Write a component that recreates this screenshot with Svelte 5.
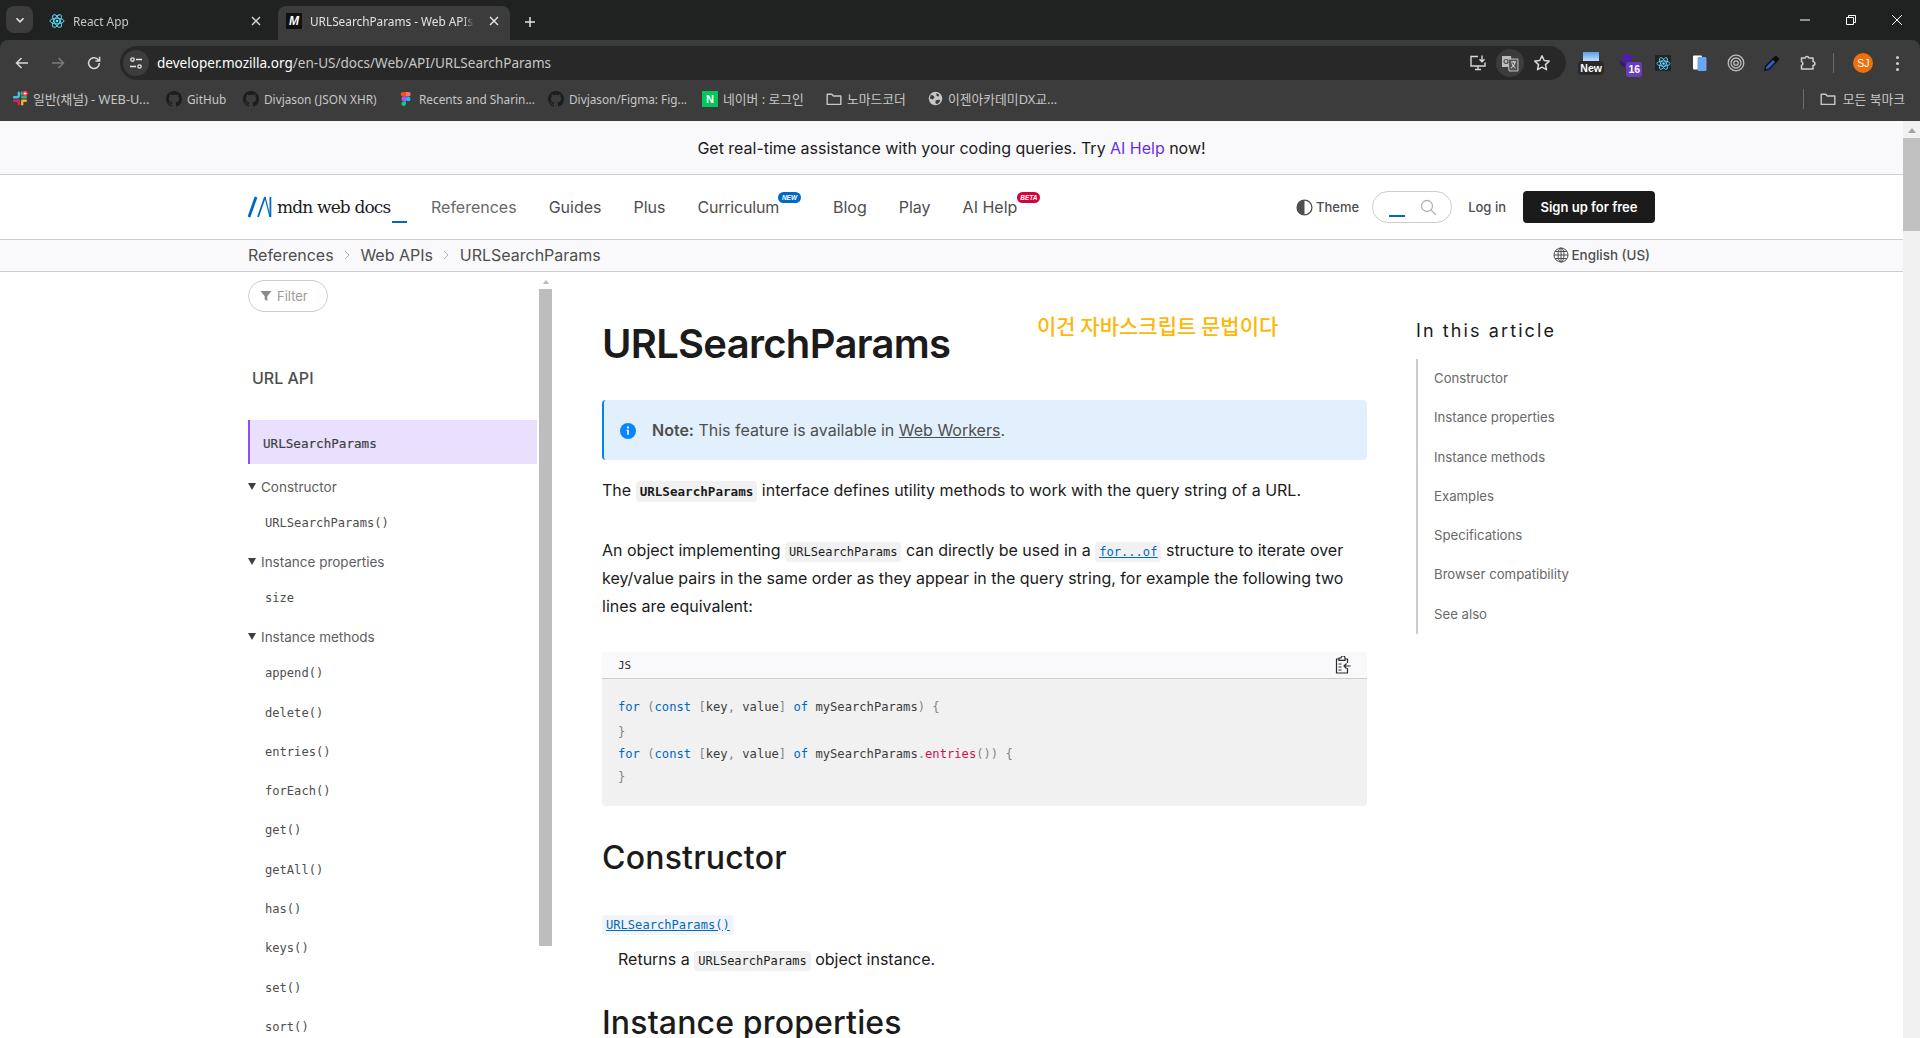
<script>
  const GH =
    'M8 0C3.58 0 0 3.58 0 8c0 3.54 2.29 6.53 5.47 7.59.4.07.55-.17.55-.38 0-.19-.01-.82-.01-1.49-2.01.37-2.53-.49-2.69-.94-.09-.23-.48-.94-.82-1.13-.28-.15-.68-.52-.01-.53.63-.01 1.08.58 1.23.82.72 1.21 1.87.87 2.33.66.07-.52.28-.87.51-1.07-1.78-.2-3.64-.89-3.64-3.95 0-.87.31-1.59.82-2.15-.08-.2-.36-1.02.08-2.12 0 0 .67-.21 2.2.82.64-.18 1.32-.27 2-.27.68 0 1.36.09 2 .27 1.53-1.04 2.2-.82 2.2-.82.44 1.1.16 1.92.08 2.12.51.56.82 1.27.82 2.15 0 3.07-1.87 3.75-3.65 3.95.29.25.54.73.54 1.48 0 1.07-.01 1.93-.01 2.2 0 .21.15.46.55.38A8.013 8.013 0 0016 8c0-4.42-3.58-8-8-8z';

  const bookmarks = [
    { icon: 'slack', text: '일반(채널) - WEB-U...', width: 154, ko: true },
    { icon: 'github', text: 'GitHub', width: 77 },
    { icon: 'github', text: 'Divjason (JSON XHR)', width: 155 },
    { icon: 'figma', text: 'Recents and Sharin...', width: 150 },
    { icon: 'github', text: 'Divjason/Figma: Fig...', width: 154 },
    { icon: 'naver', text: '네이버 : 로그인', width: 124, ko: true },
    { icon: 'folder', text: '노마드코더', width: 101, ko: true },
    { icon: 'globe', text: '이젠아카데미DX교...', width: 140, ko: true }
  ];

  const menu = ['Guides', 'Plus'];
  const toc = ['Constructor', 'Instance properties', 'Instance methods', 'Examples', 'Specifications', 'Browser compatibility', 'See also'];
  const methods = ['append()', 'delete()', 'entries()', 'forEach()', 'get()', 'getAll()', 'has()', 'keys()', 'set()', 'sort()'];
</script>

{#snippet atom(size)}
  <svg width={size} height={size} viewBox="0 0 24 24" fill="none" stroke="#61dafb" stroke-width="1.4">
    <ellipse cx="12" cy="12" rx="10.5" ry="4.2" />
    <ellipse cx="12" cy="12" rx="10.5" ry="4.2" transform="rotate(60 12 12)" />
    <ellipse cx="12" cy="12" rx="10.5" ry="4.2" transform="rotate(120 12 12)" />
    <circle cx="12" cy="12" r="2" fill="#61dafb" stroke="none" />
  </svg>
{/snippet}

{#snippet folder(size)}
  <svg width={size} height={size} viewBox="0 0 16 16" fill="none" stroke="#c7c7c7" stroke-width="1.4">
    <path d="M1.2 3.2h4.6l1.6 1.8h7.4v8.4H1.2z" stroke-linejoin="round" />
  </svg>
{/snippet}

{#snippet bookmarkIcon(kind)}
  {#if kind === 'slack'}
    <svg width="17" height="17" viewBox="0 0 16 16">
      <rect x="5.6" y="1" width="2.4" height="6" rx="1.2" fill="#36c5f0" />
      <rect x="1" y="5.6" width="6" height="2.4" rx="1.2" fill="#36c5f0" />
      <rect x="9" y="5.6" width="6" height="2.4" rx="1.2" fill="#2eb67d" />
      <rect x="8.6" y="1" width="2.4" height="4" rx="1.2" fill="#2eb67d" />
      <rect x="9" y="9" width="6" height="2.4" rx="1.2" fill="#ecb22e" />
      <rect x="9" y="10" width="2.4" height="5" rx="1.2" fill="#ecb22e" />
      <rect x="5.6" y="9" width="2.4" height="6" rx="1.2" fill="#e01e5a" />
      <rect x="1" y="9" width="6" height="2.4" rx="1.2" fill="#e01e5a" />
      <circle cx="13" cy="3" r="2.8" fill="#e8384f" />
      <path d="M13 1.6v2.8M11.6 3h2.8" stroke="#fff" stroke-width="1" />
    </svg>
  {:else if kind === 'github'}
    <svg width="16" height="16" viewBox="0 0 16 16"><path d={GH} fill="#1b1d1f" /></svg>
  {:else if kind === 'figma'}
    <svg width="16" height="16" viewBox="0 0 16 16">
      <path d="M4.5 1h3.5v4.6H5.8A2.3 2.3 0 0 1 4.5 1z" fill="#f24e1e" />
      <path d="M8 1h2.4a2.3 2.3 0 0 1 0 4.6H8z" fill="#ff7262" />
      <path d="M8 5.6h-2.2a2.3 2.3 0 0 0 0 4.8H8z" fill="#a259ff" />
      <circle cx="10.2" cy="8" r="2.3" fill="#1abcfe" />
      <path d="M5.8 10.4H8v2.4a2.3 2.3 0 1 1-2.2-2.4z" fill="#0acf83" />
    </svg>
  {:else if kind === 'naver'}
    <span class="naver">N</span>
  {:else if kind === 'folder'}
    {@render folder(16)}
  {:else}
    <svg width="15" height="15" viewBox="0 0 16 16">
      <circle cx="8" cy="8" r="7.2" fill="#c7c7c7" />
      <path d="M3 4l3 1 1 2-2 2-3-1zM9 2l3 2-1 2-2-1zM8 10l4-1 1 2-3 3-2-1z" fill="#3c3c3c" />
    </svg>
  {/if}
{/snippet}

{#snippet scrollArrow()}
  <span class="arrow"></span>
{/snippet}

<div class="chrome">
  <div class="tabstrip">
    <div class="tab-search">
      <svg width="10" height="10" viewBox="0 0 10 10" fill="none" stroke="#e3e3e3" stroke-width="1.6"><path d="M1.5 3.2L5 6.8l3.5-3.6" /></svg>
    </div>
    <div class="tab">
      <span class="favicon">{@render atom(16)}</span>
      <span class="tab-title">React App</span>
      <svg class="tab-x" width="10" height="10" viewBox="0 0 10 10" stroke="#d8d8d8" stroke-width="1.4"><path d="M1 1l8 8M9 1l-8 8" /></svg>
    </div>
    <div class="tab active">
      <span class="mdn-fav">M</span>
      <span class="tab-title">URLSearchParams - Web APIs</span>
      <svg class="tab-x" width="10" height="10" viewBox="0 0 10 10" stroke="#e8e8e8" stroke-width="1.4"><path d="M1 1l8 8M9 1l-8 8" /></svg>
    </div>
    <svg class="plus" width="12" height="12" viewBox="0 0 12 12" stroke="#e3e3e3" stroke-width="1.5"><path d="M6 1v10M1 6h10" /></svg>
    <div class="win">
      <svg width="12" height="12" viewBox="0 0 12 12" stroke="#fff"><path d="M1 6h10" /></svg>
      <svg width="12" height="12" viewBox="0 0 12 12" fill="none" stroke="#fff"><path d="M1.5 3.5h7v7h-7zM3.5 3.5v-2h7v7h-2" /></svg>
      <svg width="12" height="12" viewBox="0 0 12 12" stroke="#fff"><path d="M1 1l10 10M11 1L1 11" /></svg>
    </div>
  </div>

  <div class="toolbar">
    <div class="navbtns">
      <svg width="16" height="16" viewBox="0 0 16 16" fill="none" stroke="#d8d8d8" stroke-width="1.5"><path d="M14 8H2.5M7.5 3L2.5 8l5 5" /></svg>
      <svg width="16" height="16" viewBox="0 0 16 16" fill="none" stroke="#7c7c7c" stroke-width="1.5"><path d="M2 8h11.5M8.5 3l5 5-5 5" /></svg>
      <svg width="16" height="16" viewBox="0 0 16 16" fill="none" stroke="#d8d8d8" stroke-width="1.5"><path d="M13.4 8a5.4 5.4 0 1 1-1.6-3.8L13.6 6M13.6 1.8V6H9.4" /></svg>
    </div>
    <div class="omnibox">
      <div class="site-info">
        <svg width="14" height="14" viewBox="0 0 14 14" fill="none" stroke="#e3e3e3" stroke-width="1.3">
          <circle cx="3.5" cy="3.5" r="1.7" /><path d="M7 3.5h6M1 10.5h6" /><circle cx="10.5" cy="10.5" r="1.7" />
        </svg>
      </div>
      <div class="url"><span class="host">developer.mozilla.org</span>/en-US/docs/Web/API/URLSearchParams</div>
      <div class="omni-actions">
        <svg width="18" height="18" viewBox="0 0 18 18" fill="none" stroke="#d8d8d8" stroke-width="1.4"><path d="M9 2.5H2v9.5h14V8.5M6 15.5h6M9 12v3.5M13 1.5v6M10.5 5.2L13 7.7l2.5-2.5" /></svg>
        <span class="translate">
          <svg width="18" height="18" viewBox="0 0 18 18">
            <path d="M1 2h9l1 11H1z" fill="#bdbdbd" /><path d="M7 5h10v12H8z" fill="#545454" stroke="#bdbdbd" />
            <path d="M10 8h5M12.5 7v1M14 8c-.6 3-2 5-4 6M11 9.5c.6 2 2 3.5 3.5 4.5" stroke="#e3e3e3" fill="none" />
            <circle cx="5" cy="7.5" r="2" fill="none" stroke="#4a4a4a" stroke-width="1.2" />
          </svg>
        </span>
        <svg width="18" height="18" viewBox="0 0 18 18" fill="none" stroke="#d8d8d8" stroke-width="1.5" stroke-linejoin="round"><path d="M9 1.8l2.2 4.7 5 .6-3.7 3.5 1 5.1L9 13.2l-4.5 2.5 1-5.1L1.8 7.1l5-.6z" /></svg>
      </div>
    </div>
    <div class="extensions">
      <span class="ext new-ext">
        <span class="ext-s"></span>
        <span class="ext-new">New</span>
      </span>
      <span class="ext stack">
        <svg width="18" height="18" viewBox="0 0 18 18"><path d="M9 1l7 5-7 5-7-5z" fill="#4d1dab" /><path d="M2 8l7 5-3 2-4-3z" fill="#3a1489" /></svg>
        <span class="ext-count">16</span>
      </span>
      <span class="ext react-ext">{@render atom(15)}</span>
      <span class="ext">
        <svg width="18" height="18" viewBox="0 0 18 18"><rect x="2" y="1.5" width="9" height="14" rx="1" fill="#fff" /><rect x="6.5" y="3" width="9" height="14" rx="1.5" fill="#6ba6f4" /></svg>
      </span>
      <span class="ext">
        <svg width="18" height="18" viewBox="0 0 18 18" fill="none" stroke="#bdbdbd"><circle cx="9" cy="9" r="7.8" stroke-width="1.3" /><circle cx="9" cy="9" r="5" stroke-width="1.3" /><circle cx="9" cy="9" r="2.2" stroke-width="1.3" /></svg>
      </span>
      <span class="ext">
        <svg width="18" height="18" viewBox="0 0 18 18"><path d="M1.8 16.2l1-4L10 5l3 3-7.2 7.2z" fill="#2f5fd0" stroke="#0d0d0d" stroke-width="1.3" /><path d="M9.5 4.5L13 1.5l3.5 3.5-3 3.5z" fill="#0d0d0d" /></svg>
      </span>
      <span class="ext">
        <svg width="18" height="18" viewBox="0 0 18 18" fill="none" stroke="#d0d0d0" stroke-width="1.5" stroke-linejoin="round"><path d="M2.5 4h3.6a2 2 0 0 1 3.8 0h4.1v3.6a1.9 1.9 0 0 1 0 3.8V15H2.5v-3.6a2 2 0 0 0 0-3.8z" /></svg>
      </span>
    </div>
    <span class="tool-divider"></span>
    <span class="avatar">SJ</span>
    <span class="dots"><i></i><i></i><i></i></span>
  </div>

  <div class="bookmarks">
    {#each bookmarks as b}
      <div class="bm" class:ko={b.ko} style="width: {b.width}px">
        <span class="bm-icon">{@render bookmarkIcon(b.icon)}</span>
        <span>{b.text}</span>
      </div>
    {/each}
    <div class="bm-right">
      <span class="tool-divider"></span>
      {@render folder(16)}
      <span>모든 북마크</span>
    </div>
  </div>
</div>

<div class="viewport">
  <div class="site">
    <div class="banner">Get real-time assistance with your coding queries. Try <a href="#ai">AI Help</a> now!</div>

    <header class="topbar">
      <div class="wrap nav">
        <div class="logo">
          <svg width="24" height="22" viewBox="0 0 24 22" fill="none">
            <path d="M1 21L8 1" stroke="#0069c2" stroke-width="2.8" />
            <path d="M10 21L17 1" stroke="#0069c2" stroke-width="1.8" />
            <path d="M17 1l5 20" stroke="#0069c2" stroke-width="1.2" />
            <path d="M22.4 1v20" stroke="#0069c2" stroke-width="1.8" />
          </svg>
          <span class="wordmark">mdn web docs</span>
          <span class="caret"></span>
        </div>
        <nav class="menu">
          <span class="first">References</span>
          {#each menu as m}<span>{m}</span>{/each}
          <span class="badged curr">Curriculum<em class="badge new">NEW</em></span>
          <span>Blog</span>
          <span>Play</span>
          <span class="badged">AI Help<em class="badge beta">BETA</em></span>
        </nav>
        <div class="actions">
          <span class="theme">
            <svg width="17" height="17" viewBox="0 0 16 16"><circle cx="8" cy="8" r="7" fill="#fff" stroke="#4e4e4e" stroke-width="1.2" /><path d="M8 1a7 7 0 0 0 0 14z" fill="#4e4e4e" /></svg>
            Theme
          </span>
          <div class="search">
            <span class="search-caret"></span>
            <svg width="17" height="17" viewBox="0 0 17 17" fill="none" stroke="#b3b3b3" stroke-width="1.3"><circle cx="7" cy="7" r="5.5" /><path d="M11 11l5 5" /></svg>
          </div>
          <span class="login">Log in</span>
          <span class="signup">Sign up for free</span>
        </div>
      </div>
    </header>

    <div class="crumbs">
      <div class="wrap crumb-row">
        <span>References</span>
        <svg width="8" height="10" viewBox="0 0 8 10" fill="none" stroke="#b3b3b3"><path d="M2 1l4 4-4 4" /></svg>
        <span>Web APIs</span>
        <svg width="8" height="10" viewBox="0 0 8 10" fill="none" stroke="#b3b3b3"><path d="M2 1l4 4-4 4" /></svg>
        <span>URLSearchParams</span>
        <span class="lang">
          <svg width="16" height="16" viewBox="0 0 16 16" fill="none" stroke="#4e4e4e"><circle cx="8" cy="8" r="7" /><ellipse cx="8" cy="8" rx="3" ry="7" /><path d="M1 8h14M2 4.5h12M2 11.5h12M8 1v14" /></svg>
          English (US)
        </span>
      </div>
    </div>

    <main class="wrap main">
      <aside class="sidebar">
        <div class="side-inner">
          <div class="filter">
            <svg width="12" height="12" viewBox="0 0 12 12"><path d="M.5 1h11L7.3 6.2V11L4.7 9.6V6.2z" fill="#8a8a8a" /></svg>
            Filter
          </div>
          <div class="side-title">URL API</div>
          <div class="side-active">URLSearchParams</div>
          <div class="summary first-summary"><i></i>Constructor</div>
          <div class="side-code">URLSearchParams()</div>
          <div class="summary"><i></i>Instance properties</div>
          <div class="side-code">size</div>
          <div class="summary"><i></i>Instance methods</div>
          {#each methods as m}
            <div class="side-code">{m}</div>
          {/each}
        </div>
        <div class="side-scroll">
          {@render scrollArrow()}
          <div class="side-thumb"></div>
        </div>
      </aside>

      <article class="article">
        <h1>URLSearchParams</h1>
        <div class="note">
          <svg width="16" height="16" viewBox="0 0 16 16"><circle cx="8" cy="8" r="8" fill="#0a84ff" /><circle cx="8" cy="4.4" r="1.1" fill="#fff" /><path d="M6.6 6.8h2.2v5h-1.6v-3.8h-.6z" fill="#fff" /></svg>
          <p><strong>Note:</strong> This feature is available in <a href="#w">Web Workers</a>.</p>
        </div>
        <p class="p1">The <code class="strong">URLSearchParams</code> interface defines utility methods to work with the query string of a URL.</p>
        <p class="p2">An object implementing <code>URLSearchParams</code> can directly be used in a <a class="code-link" href="#f"><code>for...of</code></a> structure to iterate over key/value pairs in the same order as they appear in the query string, for example the following two lines are equivalent:</p>

        <div class="codeblock">
          <div class="code-head">
            <span>JS</span>
            <svg width="16" height="18" viewBox="0 0 16 18" fill="none" stroke="#2b2b2b" stroke-width="1.2"><path d="M4 3H1.5v14h11v-5M10 3h2.5v4M4 2h2a2 2 0 0 1 4 0v2.4H4zM3.5 8h3M3.5 11h3M3.5 14h3M15.5 10H9M11.5 7.5L9 10l2.5 2.5" /></svg>
          </div>
          <pre class="code-body"><div><span class="kw">for</span> <span class="pn">(</span><span class="kw">const</span> <span class="pn">[</span>key<span class="pn">,</span> value<span class="pn">]</span> <span class="kw">of</span> mySearchParams<span class="pn">)</span> <span class="pn">{'{'}</span></div><div class="brace"><span class="pn">{'}'}</span></div><div class="tight"><span class="kw">for</span> <span class="pn">(</span><span class="kw">const</span> <span class="pn">[</span>key<span class="pn">,</span> value<span class="pn">]</span> <span class="kw">of</span> mySearchParams<span class="pn">.</span><span class="fn">entries</span><span class="pn">())</span> <span class="pn">{'{'}</span></div><div class="brace last"><span class="pn">{'}'}</span></div></pre>
        </div>

        <h2 class="h-ctor">Constructor</h2>
        <div class="dt"><a class="code-link" href="#c"><code>URLSearchParams()</code></a></div>
        <p class="dd">Returns a <code>URLSearchParams</code> object instance.</p>
        <h2 class="h-props">Instance properties</h2>
      </article>

      <aside class="toc">
        <h2>In this article</h2>
        <ul>
          {#each toc as t}<li>{t}</li>{/each}
        </ul>
      </aside>

      <div class="annotation">이건 자바스크립트 문법이다</div>
    </main>
  </div>

  <div class="page-scroll">
    {@render scrollArrow()}
    <div class="page-thumb"></div>
  </div>
</div>

<style>
  :global(body) {
    margin: 0;
    height: 1038px;
    overflow: hidden;
    background: #fff;
    font-family: Inter, "Noto Sans CJK KR", sans-serif;
  }

  a {
    color: inherit;
  }

  /* browser chrome */
  .chrome {
    height: 121px;
    background: #202221;
    font-family: "Noto Sans", "Noto Sans CJK KR", sans-serif;
  }

  .tabstrip {
    display: flex;
    height: 40px;
    box-sizing: border-box;
    padding: 6px 0 0 6px;
    align-items: flex-start;
  }

  .tab-search {
    width: 27px;
    height: 27px;
    border-radius: 8px;
    background: #3c3c3c;
    display: flex;
    align-items: center;
    justify-content: center;
  }

  .tab {
    display: flex;
    align-items: center;
    height: 34px;
    width: 239px;
    box-sizing: border-box;
    padding: 0 11px 4px 16px;
    color: #c7c7c7;
    font-size: 11.8px;
    border-radius: 8px 8px 0 0;
  }

  .tab.active {
    width: 232px;
    margin-left: 6px;
    padding: 0 11px 4px 8px;
    background: #3c3c3c;
    color: #e3e3e3;
  }

  .favicon {
    display: flex;
    margin-right: 8px;
  }

  .mdn-fav {
    width: 16px;
    height: 16px;
    background: #111;
    color: #fff;
    font: italic 700 12px/16px "Liberation Sans", sans-serif;
    text-align: center;
    margin-right: 8px;
    flex: none;
  }

  .tab-title {
    flex: 1;
    white-space: nowrap;
    overflow: hidden;
    mask-image: linear-gradient(to right, #000 92%, transparent 100%);
  }

  .tab-x {
    margin-left: 14px;
    flex: none;
  }

  .plus {
    margin: 10px 0 0 14px;
  }

  .win {
    margin-left: auto;
    display: flex;
    gap: 34px;
    padding: 8px 17px 0 0;
  }

  .toolbar {
    display: flex;
    align-items: flex-start;
    height: 40px;
    background: #3c3c3c;
    padding-top: 6px;
    box-sizing: border-box;
    border-radius: 8px 8px 0 0;
  }

  .navbtns {
    width: 108px;
    margin-left: 4px;
    display: grid;
    grid-template-columns: repeat(3, 36px);
    justify-items: center;
    align-items: center;
    height: 34px;
  }

  .omnibox {
    margin-left: 8px;
    width: 1446px;
    height: 34px;
    background: #282828;
    border-radius: 17px;
    display: flex;
    align-items: center;
  }

  .site-info {
    width: 26px;
    height: 26px;
    border-radius: 50%;
    background: #3c3c3c;
    margin-left: 3px;
    display: flex;
    align-items: center;
    justify-content: center;
  }

  .url {
    margin-left: 8px;
    font-size: 13.55px;
    padding-bottom: 1px;
    color: #c7c7c7;
  }

  .host {
    color: #fff;
  }

  .omni-actions {
    margin-left: auto;
    width: 96px;
    margin-right: 8px;
    display: grid;
    grid-template-columns: repeat(3, 32px);
    justify-items: center;
    align-items: center;
  }

  .translate {
    width: 28px;
    height: 28px;
    border-radius: 50%;
    background: #3c3c3c;
    display: flex;
    align-items: center;
    justify-content: center;
  }

  .extensions {
    margin-left: 7px;
    display: grid;
    grid-template-columns: repeat(7, 36.2px);
    height: 34px;
    align-items: center;
    justify-items: center;
  }

  .ext {
    position: relative;
    display: flex;
    align-items: center;
    justify-content: center;
    width: 20px;
    height: 20px;
  }

  .ext-s {
    width: 16px;
    height: 14px;
    background: linear-gradient(#5aa0e8, #fff);
    margin-top: -8px;
  }

  .ext-new {
    position: absolute;
    left: -3px;
    top: 8px;
    width: 26px;
    height: 14px;
    border-radius: 4px;
    background: #292929;
    color: #fff;
    font: 700 10.5px/14px "Liberation Sans", sans-serif;
    text-align: center;
  }

  .ext-count {
    position: absolute;
    left: 9px;
    top: 9px;
    width: 16px;
    height: 15px;
    border-radius: 3px;
    background: #6a3cc0;
    color: #fff;
    font: 700 10.5px/15px "Liberation Sans", sans-serif;
    text-align: center;
  }

  .stack svg {
    margin-top: -4px;
  }

  .react-ext {
    width: 16px;
    height: 16px;
    background: #20232a;
  }

  .tool-divider {
    width: 1px;
    height: 20px;
    background: #6b6b6b;
    margin: 7px 0 0 7px;
  }

  .avatar {
    width: 20px;
    height: 20px;
    margin: 7px 0 0 19px;
    border-radius: 50%;
    background: #ee6f0d;
    color: #fff;
    font: 400 10.5px/20px "Liberation Sans", sans-serif;
    text-align: center;
  }

  .dots {
    display: flex;
    flex-direction: column;
    gap: 3px;
    margin: 10px 0 0 23px;
  }

  .dots i {
    width: 3px;
    height: 3px;
    border-radius: 50%;
    background: #d0d0d0;
  }

  .bookmarks {
    height: 41px;
    background: #3c3c3c;
    display: flex;
    align-items: center;
    padding: 0 15px 4px 12px;
    box-sizing: border-box;
    font-size: 11.8px;
    color: #c7c7c7;
  }

  .bm {
    display: flex;
    align-items: center;
    gap: 5px;
    white-space: nowrap;
    flex: none;
  }

  .bm.ko,
  .bm-right {
    font-size: 12.8px;
  }

  .bm-icon {
    display: flex;
    width: 16px;
    height: 16px;
    align-items: center;
    justify-content: center;
    flex: none;
  }

  .naver {
    width: 16px;
    height: 16px;
    background: #03c75a;
    color: #fff;
    font: 900 11px/16px "Liberation Sans", sans-serif;
    text-align: center;
  }

  .bm-right {
    margin-left: auto;
    display: flex;
    align-items: center;
    gap: 7px;
  }

  .bm-right .tool-divider {
    margin: 0 9px 0 0;
  }

  /* page */
  .viewport {
    display: flex;
    height: 917px;
    overflow: hidden;
  }

  .site {
    flex: 1;
    min-width: 0;
    color: #1b1b1b;
  }

  .page-scroll {
    width: 17px;
    background: #f1f1f1;
    flex: none;
    display: flex;
    flex-direction: column;
    align-items: center;
  }

  .arrow {
    width: 0;
    height: 0;
    border: 4px solid transparent;
    border-top: 0;
    border-bottom: 5px solid #a3a3a3;
    margin-top: 7px;
    flex: none;
  }

  .page-thumb {
    width: 100%;
    height: 93px;
    margin-top: 5px;
    background: #c1c1c1;
  }

  .wrap {
    width: 1407px;
    margin: 0 auto;
  }

  .banner {
    height: 54px;
    box-sizing: border-box;
    background: #f9f9fb;
    border-bottom: 1px solid #cdcdcd;
    text-align: center;
    font-size: 16px;
    line-height: 54px;
    letter-spacing: -0.02px;
    color: #1b1b1b;
  }

  .banner a {
    color: #6a30e0;
    text-decoration: none;
  }

  .topbar {
    height: 65px;
    box-sizing: border-box;
    border-bottom: 1px solid #cdcdcd;
  }

  .nav {
    display: flex;
    align-items: center;
    height: 64px;
  }

  .logo {
    display: flex;
    align-items: center;
    width: 183px;
    flex: none;
    position: relative;
  }

  .wordmark {
    margin-left: 5px;
    font: 400 17px "DejaVu Serif", serif;
    letter-spacing: -0.85px;
    color: #1b1b1b;
    white-space: nowrap;
  }

  .caret {
    width: 15px;
    height: 2px;
    background: #0069c2;
    position: absolute;
    left: 144px;
    top: 25px;
  }

  .menu {
    display: flex;
    gap: 32px;
    font-size: 16px;
    color: #4e4e4e;
    white-space: nowrap;
  }

  .menu .first {
    color: #696969;
  }

  .badged {
    position: relative;
    padding-right: 23px;
  }

  .curr {
    letter-spacing: -0.2px;
    padding-right: 22px;
  }

  .badge {
    position: absolute;
    right: 0;
    top: -5px;
    height: 11px;
    width: 23px;
    border-radius: 6px;
    color: #fff;
    font: italic 800 6.5px/11px "Liberation Sans", sans-serif;
    letter-spacing: 0;
    text-align: center;
  }

  .new {
    background: #0069c2;
  }

  .beta {
    background: #d6003c;
  }

  .actions {
    margin-left: auto;
    display: flex;
    align-items: center;
    white-space: nowrap;
    color: #4e4e4e;
  }

  .theme {
    display: flex;
    align-items: center;
    gap: 3px;
    font-size: 13px;
    font-weight: 500;
  }

  .search {
    width: 80px;
    height: 32px;
    box-sizing: border-box;
    margin-left: 13px;
    border: 1px solid #cdcdcd;
    border-radius: 16px;
    display: flex;
    align-items: center;
    justify-content: flex-end;
    padding-right: 14px;
    position: relative;
  }

  .search-caret {
    position: absolute;
    left: 16px;
    top: 23px;
    width: 16px;
    height: 2px;
    background: #0069c2;
  }

  .login {
    margin-left: 16px;
    font-size: 13px;
    font-weight: 500;
  }

  .signup {
    margin-left: 17px;
    width: 132px;
    height: 32px;
    border-radius: 4px;
    background: #1b1b1b;
    color: #fff;
    font-size: 13px;
    font-weight: 600;
    line-height: 32px;
    text-align: center;
  }

  .crumbs {
    height: 32px;
    box-sizing: border-box;
    background: #f9f9fb;
    border-bottom: 1px solid #cdcdcd;
  }

  .crumb-row {
    display: flex;
    align-items: center;
    gap: 9.4px;
    height: 29px;
    font-size: 16px;
    color: #4e4e4e;
  }

  .lang {
    margin-left: auto;
    padding-right: 5px;
    display: flex;
    align-items: center;
    gap: 3px;
    font-size: 13.4px;
    font-weight: 500;
  }

  .main {
    display: flex;
    position: relative;
    height: 766px;
    overflow: hidden;
  }

  .sidebar {
    width: 304px;
    flex: none;
    display: flex;
    margin-right: 50px;
    color: #5e5e5e;
  }

  .side-inner {
    width: 289px;
    margin-right: 2px;
    flex: none;
    padding-top: 8px;
  }

  .filter {
    width: 80px;
    height: 32px;
    box-sizing: border-box;
    border: 1px solid #cdcdcd;
    border-radius: 16px;
    display: flex;
    align-items: center;
    gap: 5px;
    padding-left: 11px;
    font-size: 13px;
    color: #9b9b9b;
  }

  .side-title {
    margin: 54px 0 0 4px;
    font-size: 16px;
    font-weight: 500;
    line-height: 24px;
    color: #4e4e4e;
  }

  .side-active {
    margin-top: 30px;
    height: 44px;
    box-sizing: border-box;
    background: #e9e0fd;
    border-left: 2px solid #8f4cff;
    padding-left: 13px;
    font: 400 12.6px/48px "DejaVu Sans Mono", monospace;
    color: #3f3f3f;
    -webkit-text-stroke: 0.2px #3f3f3f;
  }

  .summary {
    margin-top: 3px;
    height: 32.7px;
    line-height: 32.7px;
    font-size: 13.5px;
    display: flex;
    align-items: center;
    color: #5e5e5e;
  }

  .first-summary {
    margin-top: 6.6px;
  }

  .summary i {
    width: 0;
    height: 0;
    border: 4.5px solid transparent;
    border-bottom: 0;
    border-top: 7px solid #3f3f3f;
    margin-right: 5px;
  }

  .side-code {
    height: 39.3px;
    padding-left: 17px;
    font: 400 12.1px/41.3px "DejaVu Sans Mono", monospace;
    color: #4e4e4e;
  }

  .side-scroll {
    width: 13px;
    display: flex;
    flex-direction: column;
    align-items: center;
  }

  .side-scroll .arrow {
    margin-top: 8px;
    border-width: 3px;
    border-top: 0;
    border-bottom: 4px solid #b8b8b8;
  }

  .side-thumb {
    width: 13px;
    height: 657px;
    margin-top: 5px;
    background: #bdbdbd;
  }

  .article {
    width: 765px;
    flex: none;
    margin-right: 49px;
    padding-top: 48px;
  }

  h1 {
    margin: 0;
    font-size: 40px;
    line-height: 48px;
    font-weight: 600;
    letter-spacing: -0.7px;
  }

  .note {
    margin-top: 32px;
    height: 60px;
    box-sizing: border-box;
    background: #e2f0fd;
    border-left: 2px solid #0085f2;
    border-radius: 4px;
    display: flex;
    align-items: center;
    gap: 16px;
    padding-left: 16px;
    font-size: 16px;
    color: #4e4e4e;
  }

  .note svg {
    margin-top: 2px;
    flex: none;
  }

  .note p {
    margin: 0;
    color: #4e4e4e;
  }

  .note strong {
    font-weight: 600;
  }

  p {
    font-size: 16px;
    line-height: 28px;
    color: #1b1b1b;
    margin: 0;
  }

  .p1 {
    margin-top: 16px;
  }

  .p2 {
    margin-top: 32px;
  }

  code {
    font-family: "DejaVu Sans Mono", monospace;
    font-size: 12px;
    line-height: 1;
    background: #f1f1f1;
    border-radius: 4px;
    padding: 3px 4px;
  }

  code.strong {
    font-size: 12.6px;
    font-weight: 700;
  }

  .code-link {
    color: #0069c2;
  }

  .code-link code {
    color: #0069c2;
    font-size: 12.1px;
    text-decoration: underline;
  }

  .codeblock {
    margin-top: 32px;
    height: 154px;
    background: #f1f1f1;
    border-radius: 4px;
    overflow: hidden;
  }

  .code-head {
    height: 26px;
    background: #f9f9fb;
    border-bottom: 1px solid #cdcdcd;
    display: flex;
    align-items: center;
    justify-content: space-between;
    padding: 0 16px 0 16px;
    font: 400 11px "DejaVu Sans Mono", monospace;
    color: #2b2b2b;
  }

  .code-body {
    margin: 0;
    padding: 17px 16px 0;
    font: 400 12.15px/22px "DejaVu Sans Mono", monospace;
    color: #3c3c3c;
  }

  .brace {
    margin-top: 3px;
  }

  .brace.last {
    margin-top: 1px;
  }

  .kw {
    color: #0069c2;
  }

  .pn {
    color: #858585;
  }

  .fn {
    color: #d0114b;
  }

  h2 {
    margin: 0;
    font-weight: 500;
  }

  .h-ctor {
    margin-top: 32px;
    font-size: 32px;
    line-height: 40px;
    letter-spacing: 0.2px;
  }

  .dt {
    margin-top: 31px;
    height: 28px;
    line-height: 28px;
  }

  .dt code {
    background: #f1f5f9;
  }

  .dd {
    margin: 8px 0 0 16px;
  }

  .h-props {
    margin-top: 30px;
    font-size: 32px;
    line-height: 40px;
    letter-spacing: 0.15px;
  }

  .toc {
    flex: 1;
    padding-top: 45px;
  }

  .toc h2 {
    font-size: 18px;
    font-weight: 400;
    line-height: 28px;
    letter-spacing: 2.1px;
    color: #1b1b1b;
    white-space: nowrap;
  }

  .toc ul {
    list-style: none;
    margin: 14px 0 0;
    padding: 0 0 0 16px;
    border-left: 2px solid #cdcdcd;
  }

  .toc li {
    height: 39.3px;
    line-height: 39.3px;
    font-size: 13.2px;
    color: #696969;
    white-space: nowrap;
  }

  .annotation {
    position: absolute;
    left: 789px;
    top: 37px;
    font: 500 21px/32px "Noto Sans CJK KR", sans-serif;
    color: #fbb80b;
    white-space: nowrap;
  }
</style>
